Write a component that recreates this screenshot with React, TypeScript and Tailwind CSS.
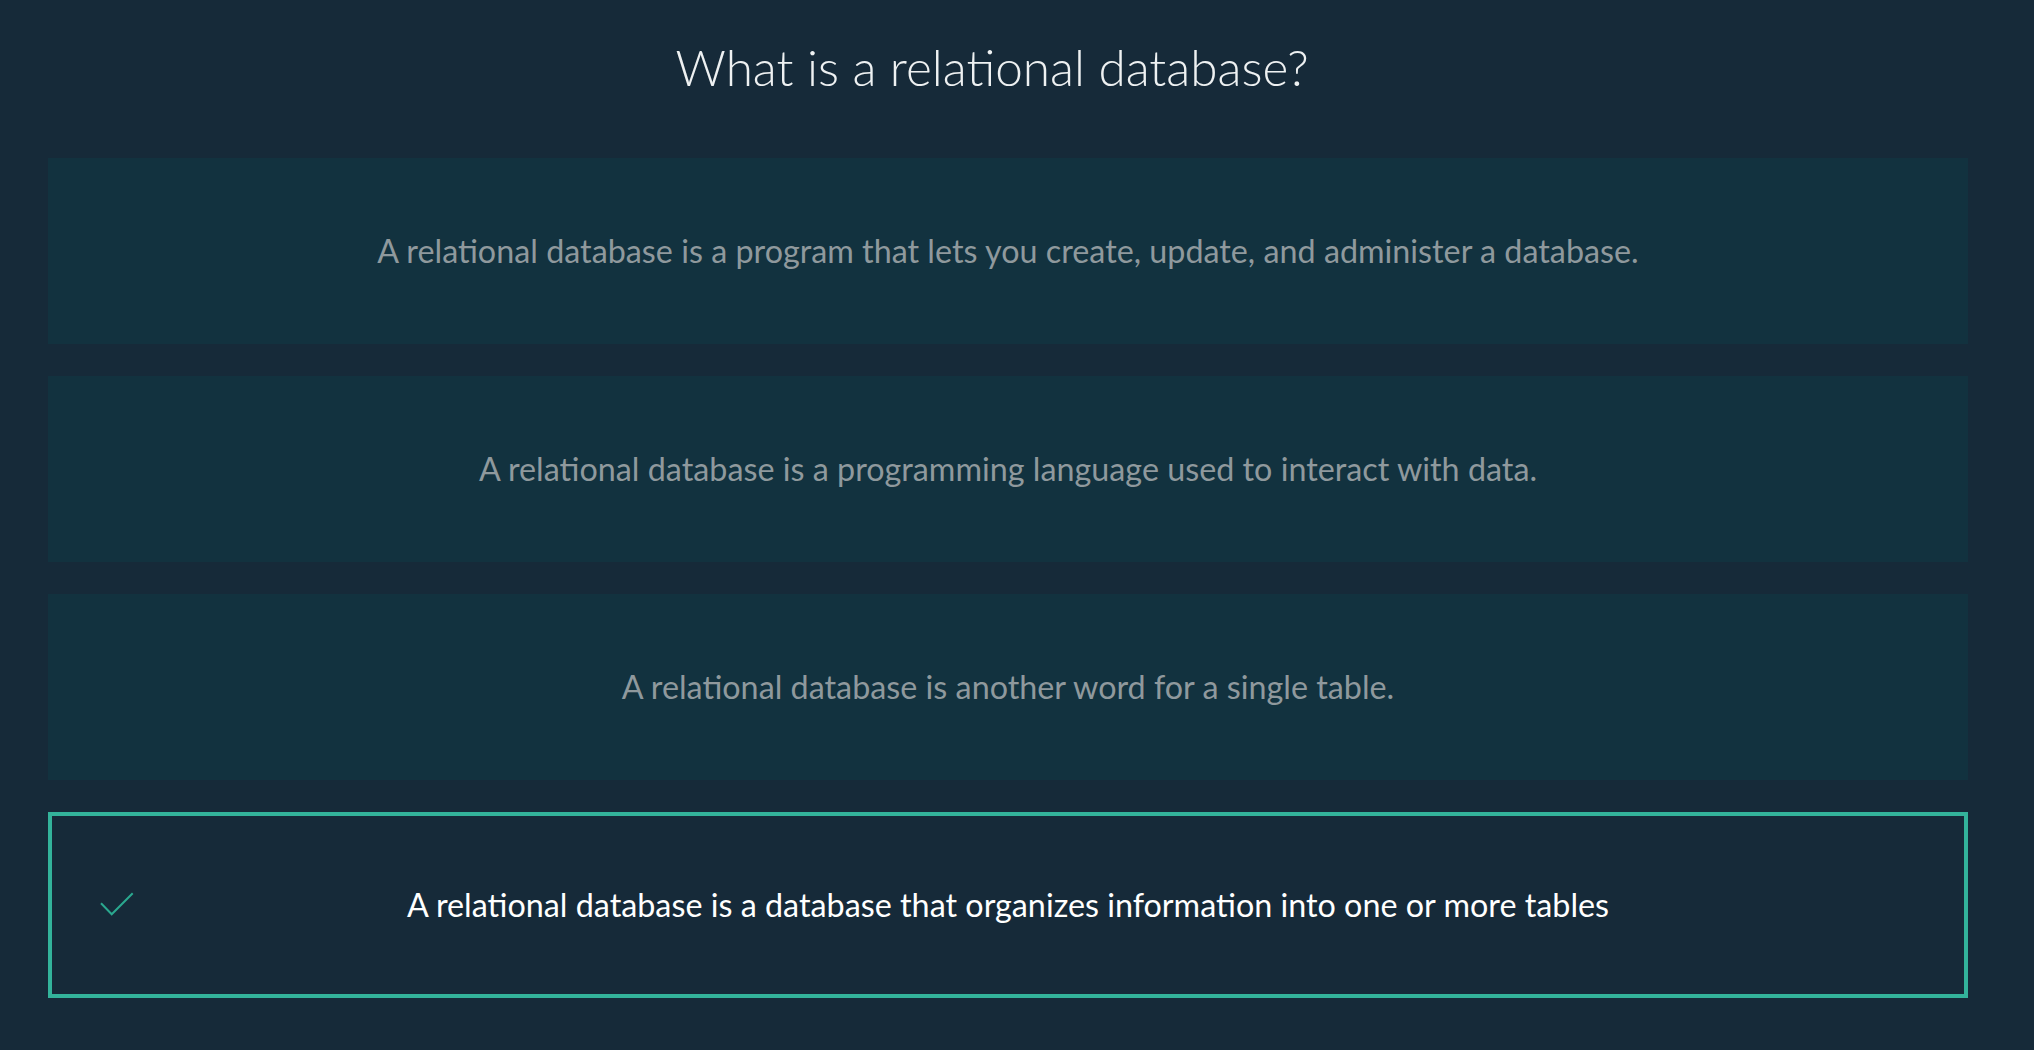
const answers = [
  { text: "A relational database is a program that lets you create, update, and administer a database.", correct: false },
  { text: "A relational database is a programming language used to interact with data.", correct: false },
  { text: "A relational database is another word for a single table.", correct: false },
  { text: "A relational database is a database that organizes information into one or more tables", correct: true },
];

const CheckMark = () => (
  <svg width="34" height="24" viewBox="0 0 34 24" fill="none" className="absolute left-[48px] top-[76px]">
    <polyline points="1,11.3 11.7,22.3 32.7,1.3" stroke="#2aa88f" strokeWidth="2" />
  </svg>
);

export default function App() {
  return (
    <div className="min-h-screen bg-[#162a39] pl-[48px] pt-[38px] font-['Lato',sans-serif]">
      <div className="w-[1920px]">
        <h1 className="pr-[32px] text-center text-[49.5px] font-light leading-[59px] text-[#eef1f2]">
          What is a relational database?
        </h1>

        <div className="mt-[61px] flex flex-col gap-[32px]">
          {answers.map((a) =>
            a.correct ? (
              <div
                key={a.text}
                className="relative flex h-[186px] items-center justify-center border-4 border-[#33b39b] bg-[#162a39]"
              >
                <CheckMark />
                <span className="text-[32.3px] leading-[40px] text-white">{a.text}</span>
              </div>
            ) : (
              <div key={a.text} className="flex h-[186px] items-center justify-center bg-[#12323f]">
                <span className="text-[32.3px] leading-[40px] text-[#8f999d]">{a.text}</span>
              </div>
            )
          )}
        </div>
      </div>
    </div>
  );
}
